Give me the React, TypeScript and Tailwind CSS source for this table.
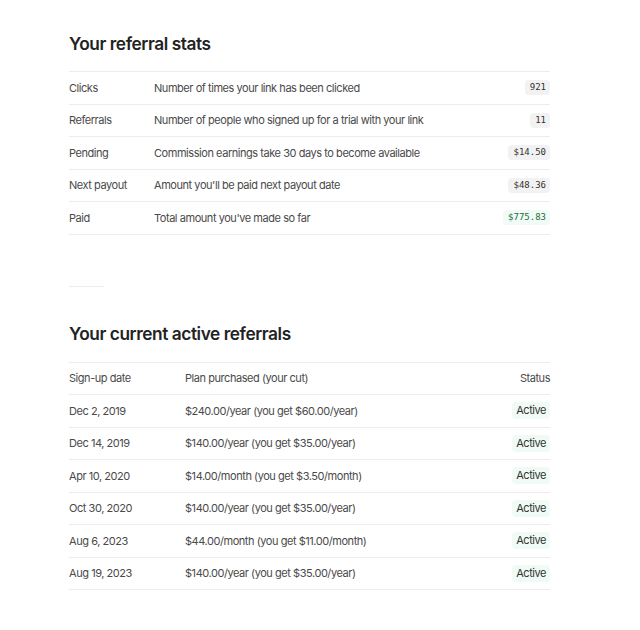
import React from 'react';

const stats = [
  { label: 'Clicks', desc: 'Number of times your link has been clicked', value: '921' },
  { label: 'Referrals', desc: 'Number of people who signed up for a trial with your link', value: '11' },
  { label: 'Pending', desc: 'Commission earnings take 30 days to become available', value: '$14.50' },
  { label: 'Next payout', desc: "Amount you'll be paid next payout date", value: '$48.36' },
  { label: 'Paid', desc: "Total amount you've made so far", value: '$775.83', paid: true },
];

const referrals = [
  { date: 'Dec 2, 2019', plan: '$240.00/year (you get $60.00/year)' },
  { date: 'Dec 14, 2019', plan: '$140.00/year (you get $35.00/year)' },
  { date: 'Apr 10, 2020', plan: '$14.00/month (you get $3.50/month)' },
  { date: 'Oct 30, 2020', plan: '$140.00/year (you get $35.00/year)' },
  { date: 'Aug 6, 2023', plan: '$44.00/month (you get $11.00/month)' },
  { date: 'Aug 19, 2023', plan: '$140.00/year (you get $35.00/year)' },
];

export default function App() {
  return (
    <div className="min-h-[630px] bg-white font-['Inter',sans-serif] text-[11px] tracking-[-0.45px] text-[#4a4a4a]">
      <div className="w-[481px] ml-[69px] pt-[30px]">
        {/* Stats */}
        <h2 className="text-[17.3px] leading-[28px] font-semibold tracking-[-0.43px] text-[#222] mb-[13px]">
          Your referral stats
        </h2>
        <div className="border-t border-[#ececec]">
          {stats.map((s) => (
            <div key={s.label} className="flex items-center h-[32.5px] border-b border-[#ececec]">
              <div className="w-[85px] shrink-0">{s.label}</div>
              <div className="flex-1">{s.desc}</div>
              <span
                className={
                  s.paid
                    ? "font-['DejaVu_Sans_Mono',monospace] text-[9px] leading-[15px] tracking-normal pl-[5px] pr-[4px] rounded-sm bg-[#f1fbf5] text-[#1d6b45]"
                    : "font-['DejaVu_Sans_Mono',monospace] text-[9px] leading-[15px] tracking-normal pl-[5px] pr-[4px] rounded-sm bg-[#f2f2f2] text-[#333]"
                }
              >
                {s.value}
              </span>
            </div>
          ))}
        </div>

        <div className="w-[35px] h-px bg-[#ececec] mt-[51px]" />

        {/* Active referrals */}
        <h2 className="text-[17.3px] leading-[28px] font-semibold tracking-[-0.43px] text-[#222] mt-[33px] mb-[14px]">
          Your current active referrals
        </h2>
        <div className="border-t border-[#ececec]">
          <div className="flex items-center h-[32.5px] border-b border-[#ececec]">
            <div className="w-[116px] shrink-0">Sign-up date</div>
            <div className="flex-1">Plan purchased (your cut)</div>
            <div>Status</div>
          </div>
          {referrals.map((r) => (
            <div key={r.date} className="flex items-center h-[32.5px] border-b border-[#ececec]">
              <div className="w-[116px] shrink-0">{r.date}</div>
              <div className="flex-1">{r.plan}</div>
              <span className="px-[4px] leading-[17px] rounded-sm bg-[#f1fbf5] text-[#333]">Active</span>
            </div>
          ))}
        </div>
      </div>
    </div>
  );
}
